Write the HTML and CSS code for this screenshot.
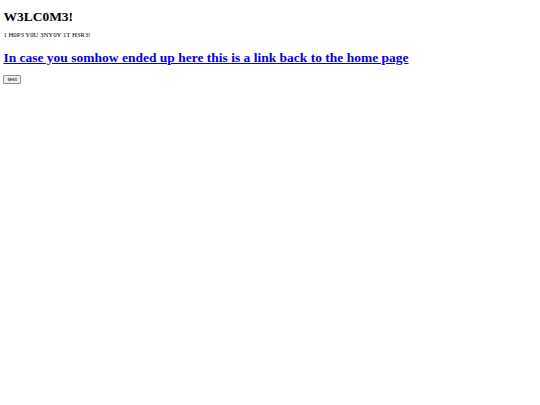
FILE: index.html
```html
<!DOCTYPE html>
<html>
<head>
<meta charset="utf-8">
<link rel="stylesheet" href="styles.css">
<title>W3LC0M3!</title>
</head>
<body>
<h1 class="title">W3LC0M3!</h1>
<p class="sub">1 H0P3 Y0U 3NY0Y 1T H3R3!</p>
<h1 class="back"><a class="back-link" href="#">In case you somhow ended up here this is a link back to the home page</a></h1>
<button class="btn">test</button>
</body>
</html>
```
FILE: styles.css
```css
html, body {
  background: #fff;
}
body {
  margin: 0;
  padding: 3.375px;
  font-family: "Liberation Serif", "Times New Roman", serif;
  color: #000;
}
.title {
  font-size: 13.5px;
  line-height: 15.6px;
  font-weight: bold;
  margin: 5.67px 0 0;
}
.sub {
  font-size: 6.75px;
  line-height: 7.76px;
  margin: 6.7px 0 0;
}
.back {
  font-size: 13.5px;
  line-height: 15.6px;
  font-weight: bold;
  margin: 10.5px 0 0;
}
.back-link {
  color: #0000ee;
}
.btn {
  display: block;
  font-family: "Liberation Sans", Arial, sans-serif;
  font-size: 5.625px;
  line-height: 6.5px;
  padding: 0.5px 3.3px;
  border: 0.5px solid #8f8f8f;
  border-radius: 1px;
  background: #efefef;
  color: #000;
  margin: 9.5px 0 0;
}
```
